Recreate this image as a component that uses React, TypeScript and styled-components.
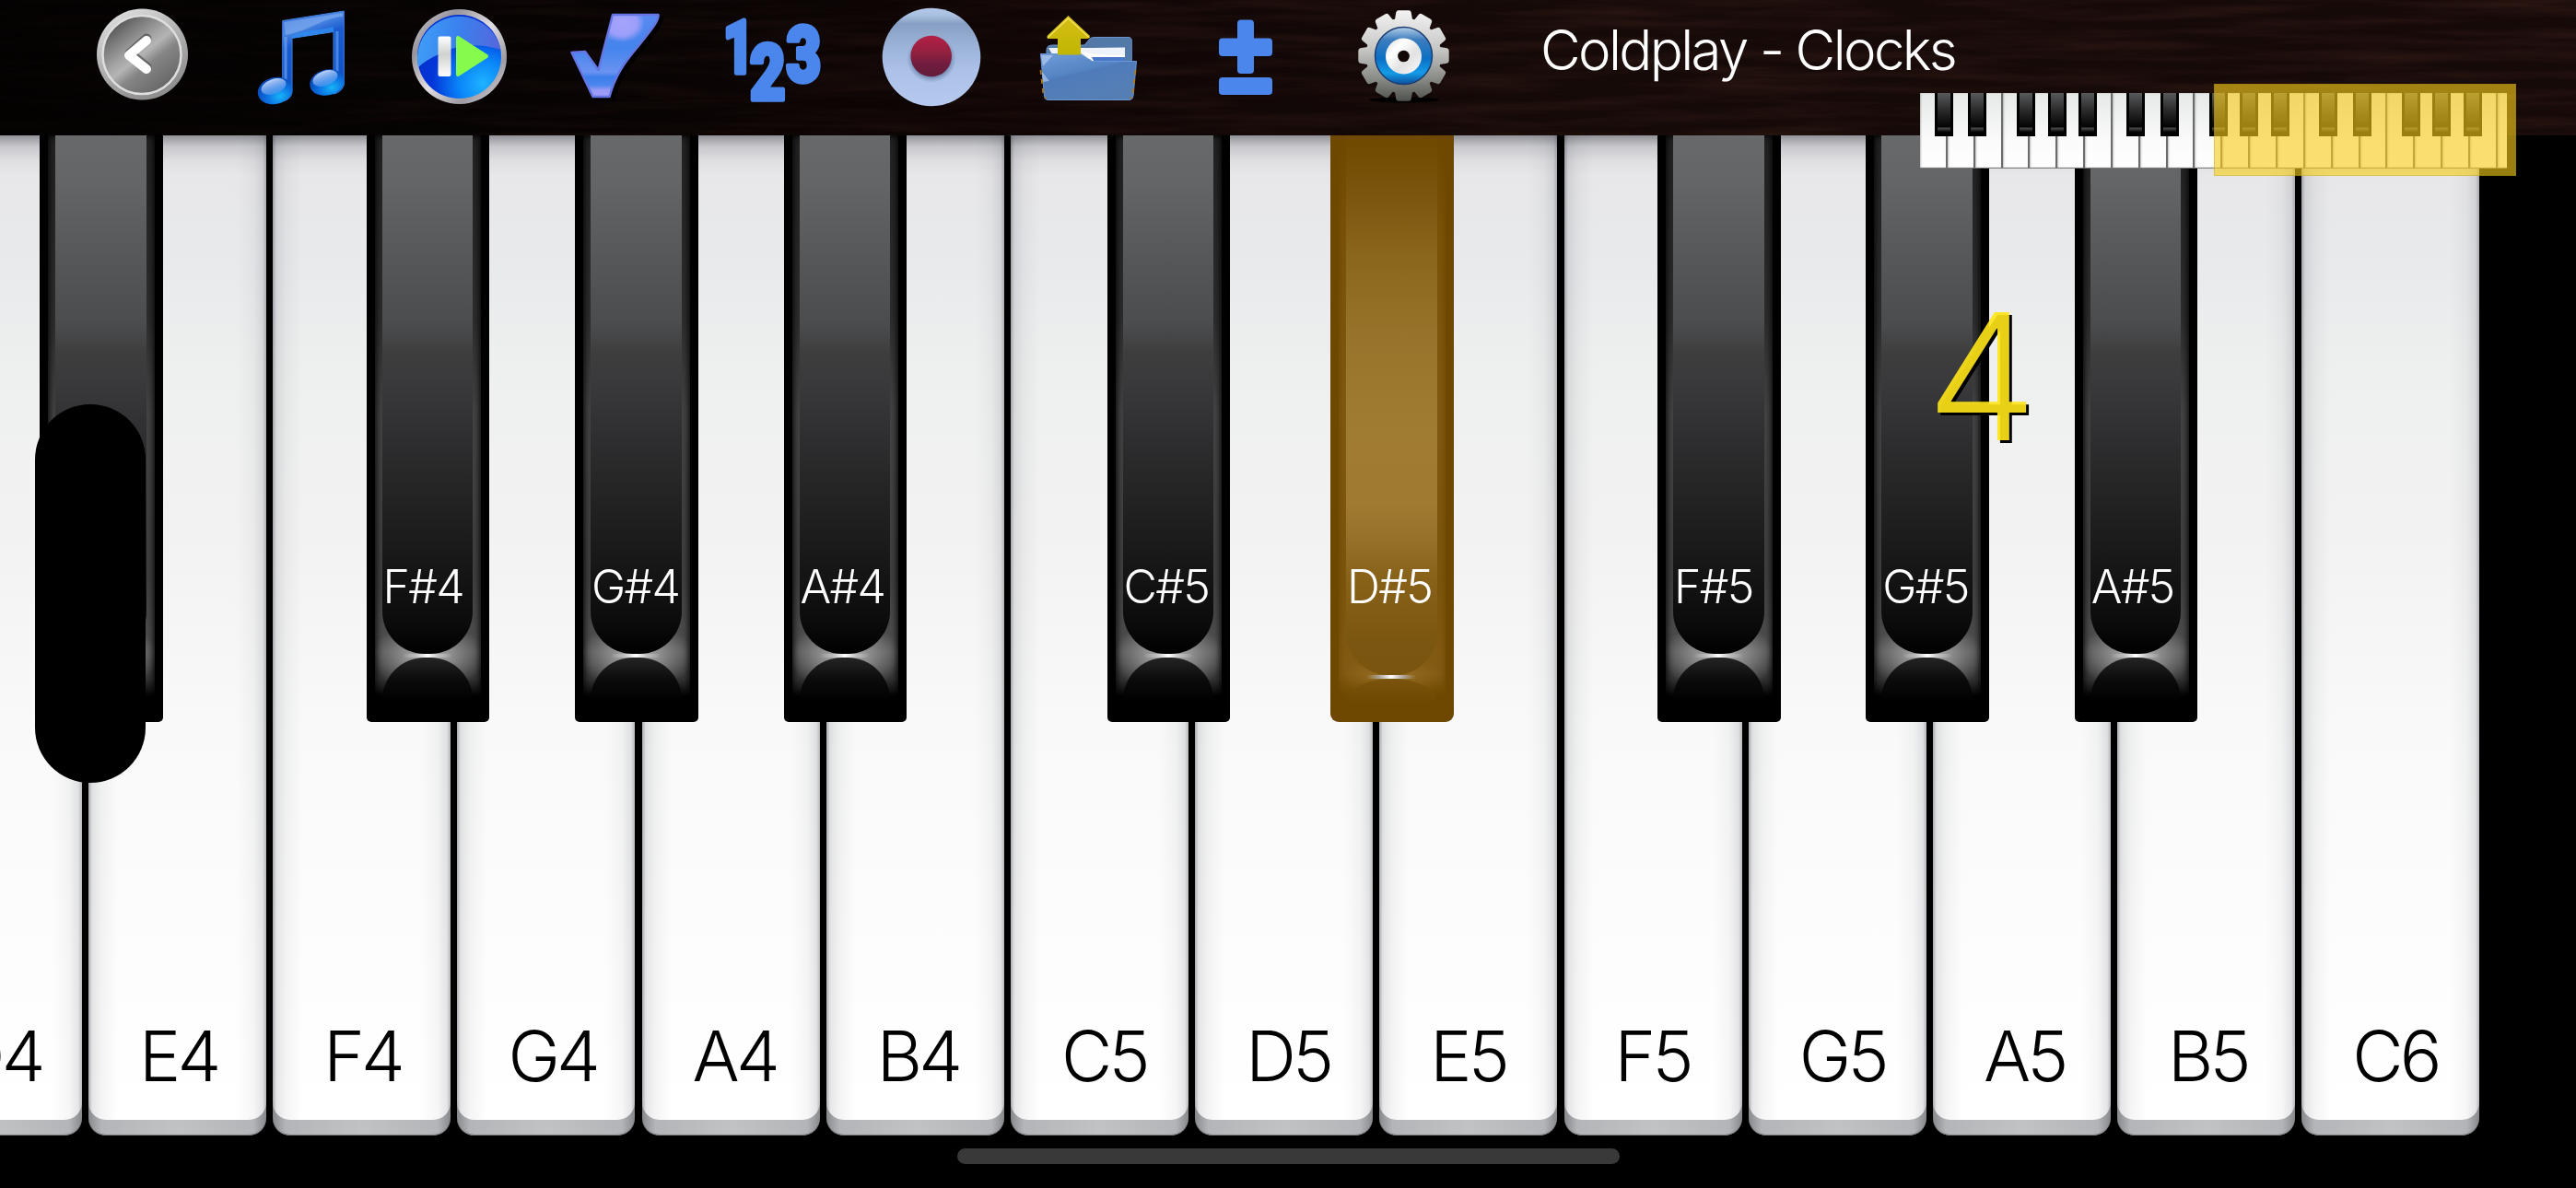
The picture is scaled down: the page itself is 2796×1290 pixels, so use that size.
import React from 'react';
import styled, { createGlobalStyle, css } from 'styled-components';

const GlobalStyle = createGlobalStyle`
  * { box-sizing: border-box; }
  html, body { margin: 0; background: #000; overflow: hidden; }
`;

const labelFont = css`
  font-family: Inter, 'Liberation Sans', sans-serif;
  font-weight: 300;
  line-height: 1;
  white-space: nowrap;
`;

const Screen = styled.div`
  position: relative;
  display: flex;
  flex-direction: column;
  width: 2796px;
  height: 1290px;
  overflow: hidden;
  background: #000;
`;

const Toolbar = styled.header`
  position: relative;
  display: flex;
  flex: none;
  height: 147px;
  padding-left: 69px;
  background: linear-gradient(90deg, #040202 0, #060303 500px, #0f0605 1100px, #150a08 1700px, #160a09 100%);
`;

const Grain = styled.svg`
  position: absolute;
  inset: 0;
  width: 100%;
  height: 100%;
`;

const ToolButton = styled.button`
  position: relative;
  flex: none;
  width: 171px;
  height: 147px;
  padding: 0;
  border: 0;
  background: none;
  svg { display: block; }
`;

const Title = styled.h1`
  ${labelFont}
  position: relative;
  margin: 24px 0 0 64px;
  font-size: 60px;
  letter-spacing: -2.65px;
  color: #fff;
`;

const Keybed = styled.main`
  position: relative;
  display: flex;
  flex: none;
  gap: 7.2px;
  width: 2796px;
  height: 1086px;
  overflow: hidden;
`;

const WhiteBase = styled.div<{ $first: boolean }>`
  flex: none;
  width: 193px;
  height: 1086px;
  margin-left: ${p => (p.$first ? '-104.2px' : '0')};
  padding-bottom: 17px;
  border-radius: 0 0 19px 19px;
  background: linear-gradient(90deg, #88898c 0, #b4b5b8 14px, #c1c2c4 50%, #b4b5b8 179px, #88898c 100%);
  box-shadow: inset 0 -1px 1px #77787b;
`;

const WhiteFace = styled.div`
  display: flex;
  align-items: flex-end;
  height: 100%;
  padding: 0 0 32px 55px;
  border-radius: 0 0 19px 19px;
  background:
    linear-gradient(180deg, rgba(60, 62, 72, .5) 0, rgba(90, 92, 102, .22) 12px, rgba(120, 122, 132, .07) 28px, transparent 44px),
    linear-gradient(90deg, rgba(50, 52, 64, .4) 0, rgba(80, 82, 94, .15) 4px, rgba(100, 102, 114, .07) 14px, transparent 32px, transparent 161px, rgba(100, 102, 114, .06) 179px, rgba(80, 82, 94, .15) 189px, rgba(50, 52, 64, .34) 100%),
    linear-gradient(180deg, #e6e6e8 0, #e9eaec 150px, #eef0ef 260px, #f2f2f2 430px, #f8f9f8 640px, #fdfdfd 900px, #fff 100%);
`;

const WhiteLabel = styled.span`
  ${labelFont}
  font-size: 76px;
  letter-spacing: -3.8px;
  color: #000;
`;

const BlackKeyBody = styled.div<{ $x: number; $lit: boolean }>`
  position: absolute;
  top: 0;
  left: ${p => p.$x}px;
  display: flex;
  flex-direction: column;
  width: 133.5px;
  height: 637px;
  padding: 0 18px 0 17px;
  border-radius: 0 0 ${p => (p.$lit ? '9px 9px' : '5px 5px')};
  background: ${p => (p.$lit ? '#6e4800' : '#000')};
`;

const Bevel = styled.div<{ $lit: boolean }>`
  position: absolute;
  top: 0;
  left: 9px;
  right: 9px;
  height: 610px;
  background: ${p =>
    p.$lit
      ? `radial-gradient(ellipse 52px 24px at 50% 588px, rgba(200,150,70,.35), transparent),
         linear-gradient(180deg, #6e4800 0, #7a5208 100px, #815912 300px, #7c550d 480px, #835b14 585px, #6e4800 610px)`
      : `radial-gradient(ellipse 62px 38px at 50% 566px, rgba(225,225,225,.75), transparent),
         linear-gradient(180deg, #222 0, #2d2d2d 200px, #434343 300px, #3f3f3f 480px, #4e4e4f 560px, #333 590px, #000 610px)`};
  box-shadow: inset 0 0 7px 1px ${p => (p.$lit ? '#6e4800' : '#000')};
`;

const BlackFace = styled.div<{ $lit: boolean }>`
  position: relative;
  display: flex;
  flex: none;
  align-items: flex-end;
  height: ${p => (p.$lit ? 586 : 563)}px;
  padding-bottom: ${p => (p.$lit ? 71 : 48)}px;
  border-radius: 0 0 46px 46px;
  background: ${p =>
    p.$lit
      ? 'linear-gradient(180deg, #704900 0, #78510a 50px, #8a651c 130px, #98732b 220px, #a07b32 320px, #a07a31 400px, #96702a 440px, #886219 480px, #7b5610 550px, #7a5510 100%)'
      : 'linear-gradient(180deg, #68696b 0, #646567 50px, #555658 140px, #4b4c4e 205px, #3e3e3f 235px, #39393b 270px, #2e2e30 330px, #222 400px, #161616 470px, #0b0b0b 530px, #000 100%)'};
`;

const Gloss = styled.div<{ $lit: boolean }>`
  position: relative;
  flex: none;
  align-self: center;
  width: 54px;
  height: 4px;
  background: linear-gradient(90deg, transparent, ${p => (p.$lit ? '#a9a294' : '#bbb')} 25%, #fff 50%, ${p => (p.$lit ? '#a9a294' : '#bbb')} 75%, transparent);
`;

const Dome = styled.div<{ $lit: boolean }>`
  position: relative;
  flex: none;
  height: ${p => (p.$lit ? 26 : 48)}px;
  border-radius: ${p => (p.$lit ? '50% 50% 0 0 / 100% 100% 0 0' : '46px 46px 0 0')};
  background: ${p => (p.$lit ? 'linear-gradient(180deg, #7a540d, #6e4800)' : 'linear-gradient(180deg, #242424, #0b0b0b 50%, #000)')};
`;

const BlackLabel = styled.span`
  ${labelFont}
  margin-left: 1px;
  font-size: 50px;
  letter-spacing: -1.7px;
  color: #fff;
`;

const FingerMarker = styled.div`
  position: absolute;
  top: 439px;
  left: 37.5px;
  width: 120px;
  height: 411px;
  border-radius: 60px;
  background: #000;
`;

const FingerNumber = styled.div`
  ${labelFont}
  position: absolute;
  top: 313px;
  left: 2091px;
  font-size: 191px;
  color: rgba(255, 229, 25, .91);
  text-shadow: 3px 3px 0 #000;
`;

const MiniMap = styled.div`
  position: absolute;
  top: 101px;
  left: 2084px;
  display: flex;
  width: 637px;
  height: 82px;
  overflow: hidden;
  background: #fff;
`;

const MiniWhite = styled.div`
  flex: none;
  width: 29.85px;
  height: 82px;
  border-right: 2px solid #6a6b6d;
  border-bottom: 1px solid #777;
  background: linear-gradient(180deg, #e6e8e8, #fafafa 60%, #fff);
  box-shadow: inset 1px 0 2px rgba(0, 0, 0, .25);
`;

const MiniBlack = styled.div<{ $x: number }>`
  position: absolute;
  top: 0;
  left: ${p => p.$x}px;
  width: 20px;
  height: 46.5px;
  border: solid #000;
  border-width: 0 3px 4px;
  background:
    linear-gradient(180deg, transparent 37px, #4a4a4a 38px, #1c1c1c 41px, transparent 42px),
    linear-gradient(180deg, #58595b, #2c2c2d 18px, #050505 36px);
`;

const VisibleRange = styled.div`
  position: absolute;
  top: 91px;
  left: 2402.5px;
  width: 328.5px;
  height: 99.5px;
  background: rgba(247, 205, 24, .62);
  box-shadow: inset 0 0 0 1px rgba(150, 115, 0, .25);
`;

const HomeIndicator = styled.div`
  position: absolute;
  left: 1039px;
  top: 1247px;
  width: 719px;
  height: 17px;
  border-radius: 8.5px;
  background: #393939;
`;

const Icon = ({ children }: { children: React.ReactNode }) => (
  <svg width="171" height="147" viewBox="0 0 171 147">{children}</svg>
);

const BackIcon = () => (
  <Icon>
    <defs>
      <linearGradient id="bkRim" x1="0" y1="0" x2="0.5" y2="1">
        <stop offset="0" stopColor="#e8e8e8" /><stop offset=".5" stopColor="#b5b5b5" /><stop offset="1" stopColor="#8f8f8f" />
      </linearGradient>
      <linearGradient id="bkFace" x1=".1" y1="0" x2=".9" y2="1">
        <stop offset="0" stopColor="#3c3c3c" /><stop offset=".22" stopColor="#777" /><stop offset=".42" stopColor="#a6a6a6" />
        <stop offset=".5" stopColor="#b4b4b4" /><stop offset=".62" stopColor="#858585" /><stop offset="1" stopColor="#5c5c5c" />
      </linearGradient>
    </defs>
    <circle cx="85.5" cy="59" r="49.5" fill="url(#bkRim)" />
    <circle cx="85" cy="59.5" r="42.5" fill="url(#bkFace)" stroke="#dedede" strokeWidth="2.5" />
    <path d="M89 44 L71 60 L89 75" fill="none" stroke="#444" strokeOpacity=".6" strokeWidth="11" strokeLinecap="round" strokeLinejoin="round" transform="translate(1,-2)" />
    <path d="M90 44 L71 60 L90 75" fill="none" stroke="#fff" strokeWidth="10" strokeLinecap="round" strokeLinejoin="round" />
  </Icon>
);

const NoteIcon = () => (
  <Icon>
    <defs>
      <linearGradient id="ntBeam" x1="0" y1="0" x2=".25" y2="1">
        <stop offset="0" stopColor="#2f6ad4" /><stop offset=".25" stopColor="#4a86e2" /><stop offset=".4" stopColor="#1b5bd0" /><stop offset="1" stopColor="#0d4fc8" />
      </linearGradient>
      <radialGradient id="ntHead" cx=".6" cy=".75" r=".7">
        <stop offset="0" stopColor="#17b4f7" /><stop offset=".5" stopColor="#0c74e4" /><stop offset="1" stopColor="#0a49b8" />
      </radialGradient>
      <linearGradient id="ntShine" x1="0" y1="0" x2="0" y2="1">
        <stop offset="0" stopColor="#b9d2f8" /><stop offset="1" stopColor="#5f9cf0" stopOpacity=".5" />
      </linearGradient>
    </defs>
    <path d="M66.7 22.5 L133.3 12 V91 C133 96 128 101 122 102 V34.5 L77 41.5 V100 C76 106 72 109 66.7 110 Z" fill="url(#ntBeam)" stroke="#3f80dc" strokeWidth="1" />
    <path d="M68 24 L132 14 V18 C108 20 96 34 70 38 Z" fill="#8fb8f3" opacity=".5" />
    <path d="M76 39 C92 31 108 34 122 29 V34.5 L77 41.5 Z" fill="#2f8cf0" opacity=".8" />
    <path d="M70 40 V92" stroke="#6aa2ee" strokeWidth="3" opacity=".7" />
    <path d="M126 34 V82" stroke="#5c9aee" strokeWidth="3" opacity=".7" />
    <ellipse cx="58.5" cy="98.5" rx="19" ry="14.5" fill="url(#ntHead)" transform="rotate(-14 58.5 98.5)" />
    <ellipse cx="115" cy="89.5" rx="19" ry="14" fill="url(#ntHead)" transform="rotate(-14 115 89.5)" />
    <ellipse cx="57" cy="94" rx="14" ry="8" fill="url(#ntShine)" transform="rotate(-20 57 94)" />
    <ellipse cx="113" cy="85" rx="14" ry="8" fill="url(#ntShine)" transform="rotate(-20 113 85)" />
  </Icon>
);

const PlayIcon = () => (
  <Icon>
    <defs>
      <radialGradient id="plFace" cx=".78" cy=".82" r=".8">
        <stop offset="0" stopColor="#1fb2ff" /><stop offset=".35" stopColor="#0a86fa" /><stop offset=".75" stopColor="#0336d8" /><stop offset="1" stopColor="#0430d0" />
      </radialGradient>
      <linearGradient id="plTop" x1="0" y1=".2" x2="1" y2=".3">
        <stop offset="0" stopColor="#3fa0f8" /><stop offset=".5" stopColor="#3a80ee" /><stop offset="1" stopColor="#5468dc" />
      </linearGradient>
      <linearGradient id="plRim" x1="0" y1="0" x2="1" y2="1">
        <stop offset="0" stopColor="#cfcdd4" /><stop offset=".25" stopColor="#98949c" /><stop offset=".5" stopColor="#e2e0e4" /><stop offset=".75" stopColor="#9f9ba3" /><stop offset="1" stopColor="#dedce2" />
      </linearGradient>
      <linearGradient id="plBar" x1="0" y1="0" x2="0" y2="1">
        <stop offset="0" stopColor="#fff" /><stop offset=".45" stopColor="#cfd2cf" /><stop offset="1" stopColor="#fff" />
      </linearGradient>
    </defs>
    <circle cx="87.5" cy="61.5" r="51.5" fill="url(#plRim)" />
    <circle cx="87.5" cy="61.5" r="45.5" fill="url(#plFace)" />
    <path d="M43 73 A45.5 45.5 0 1 1 132.5 54 C106 46 84 49 67 58 C56 63 48 68 43 73 Z" fill="url(#plTop)" />
    <rect x="64.5" y="39.5" width="14" height="43.5" rx="2" fill="url(#plBar)" />
    <path d="M86 41 V81 L117 61 Z" fill="#86fb4d" stroke="#86fb4d" strokeWidth="4" strokeLinejoin="round" />
  </Icon>
);

const checkShape = 'M38.5 57 L53 56 L67.5 76 L83 16 H132.500 C134 22 122 36 110 51 C94 70 85 84 79.5 105 H61.500 Z';

const CheckIcon = () => (
  <Icon>
    <defs>
      <linearGradient id="ckFill" x1="0" y1="0" x2="0" y2="1">
        <stop offset="0" stopColor="#5a8af0" /><stop offset=".4" stopColor="#4384ec" /><stop offset=".7" stopColor="#6a93f2" />
        <stop offset=".76" stopColor="#3a7eea" /><stop offset=".86" stopColor="#4e86ee" /><stop offset=".92" stopColor="#9a9bf8" /><stop offset="1" stopColor="#a09df8" />
      </linearGradient>
      <radialGradient id="ckShine" cx=".5" cy=".5" r=".5">
        <stop offset="0" stopColor="#a6a3fb" /><stop offset=".65" stopColor="#9c9ffa" /><stop offset="1" stopColor="#9c9ffa" stopOpacity="0" />
      </radialGradient>
      <clipPath id="ckClip"><path d={checkShape} /></clipPath>
    </defs>
    <path d={checkShape} fill="#000" stroke="#000" strokeWidth="3" transform="translate(4,3)" />
    <path d={checkShape} fill="url(#ckFill)" />
    <g clipPath="url(#ckClip)"><ellipse cx="93" cy="25" rx="25" ry="21" fill="url(#ckShine)" /></g>
    <path d={checkShape} fill="none" stroke="#6576e2" strokeWidth="2.5" strokeLinejoin="round" />
  </Icon>
);

const digitProps = {
  fontFamily: 'Roboto, "Liberation Sans", sans-serif',
  fontWeight: 900,
  fill: '#4a86ec',
  stroke: '#4a86ec',
  strokeWidth: 5.5,
  strokeLinejoin: 'round' as const,
};

const NumbersIcon = () => (
  <Icon>
    <text {...digitProps} fontSize="79" transform="translate(32 78.5) scale(.72 1)">1</text>
    <text {...digitProps} fontSize="83" transform="translate(100.5 88) scale(.78 1)">3</text>
    <text {...digitProps} fontSize="83" transform="translate(61 108) scale(.8 1)">2</text>
  </Icon>
);

const RecordIcon = () => (
  <Icon>
    <defs>
      <linearGradient id="rcPlate" x1="0" y1="0" x2="0" y2="1">
        <stop offset="0" stopColor="#b4c9ea" /><stop offset=".08" stopColor="#a9bfe0" /><stop offset=".16" stopColor="#879fc2" /><stop offset=".36" stopColor="#9ab1d6" /><stop offset=".65" stopColor="#adc2e8" /><stop offset="1" stopColor="#b6c9ee" />
      </linearGradient>
      <linearGradient id="rcDot" x1="0" y1="0" x2="0" y2="1">
        <stop offset="0" stopColor="#b41f45" /><stop offset=".4" stopColor="#94203f" /><stop offset=".7" stopColor="#6f1c3e" /><stop offset="1" stopColor="#641c3c" />
      </linearGradient>
      <radialGradient id="rcShade"><stop offset=".7" stopColor="#51688f" stopOpacity=".8" /><stop offset="1" stopColor="#6f88b0" stopOpacity="0" /></radialGradient>
    </defs>
    <circle cx="87" cy="62" r="53.3" fill="url(#rcPlate)" />
    <ellipse cx="87" cy="64" rx="27" ry="26" fill="url(#rcShade)" />
    <circle cx="86.7" cy="61" r="22.3" fill="url(#rcDot)" />
  </Icon>
);

const FolderIcon = () => (
  <Icon>
    <defs>
      <linearGradient id="fdFront" x1="0" y1="0" x2=".5" y2="1">
        <stop offset="0" stopColor="#6f9bd8" /><stop offset=".45" stopColor="#5584c4" /><stop offset=".5" stopColor="#4f7bbb" /><stop offset="1" stopColor="#557fb4" />
      </linearGradient>
      <linearGradient id="fdArrow" x1="0" y1="0" x2="0" y2="1">
        <stop offset="0" stopColor="#d6bd18" /><stop offset="1" stopColor="#c0b600" />
      </linearGradient>
    </defs>
    <path d="M41 55 C41 50 44 49 48 49 H82 L88 42 C89 41 91 40.500 93 40.500 H130 C132 40.500 133.3 42 133.3 44 V70 H41 Z" fill="#5379a8" stroke="#6b93cb" strokeWidth="1" />
    <path d="M43 52 H90 L126 51.5 V64 H50 Z" fill="#eef3fb" />
    <path d="M79 56 C90 59 104 60 126 60 V66 H90 Z" fill="#fff" />
    <path d="M90 62 H126 V66 H92 Z" fill="#4a78c8" />
    <path d="M34.5 58.5 H78 L90 66.500 H138.500 L135 104 C134.5 107 133 108.500 130 108.500 H43 C40 108.500 39 107 38.5 104 Z" fill="url(#fdFront)" stroke="#6c97d6" strokeWidth="1" />
    <path d="M34.5 76 L37.5 103 L40 107 M137.5 76 L134.5 103 L132 107" fill="none" stroke="#b07a10" strokeWidth="1.8" strokeDasharray="5 5" />
    <path d="M35 60 L48 60 L37 72 Z M36 78 L37 89 L44 88 Z" fill="#c6dbf7" opacity=".55" />
    <path d="M64.5 17 L88 39 L86 42 H78 V59.500 H53 V42 H42 L41.5 39 Z" fill="url(#fdArrow)" />
    <path d="M42 41 L64.5 20 L87.5 41" fill="none" stroke="#f1e25a" strokeWidth="1.5" />
  </Icon>
);

const PlusMinusIcon = () => (
  <Icon>
    <g fill="#4a86ec">
      <rect x="77" y="21.5" width="18" height="58.5" rx="4" />
      <rect x="57" y="41.5" width="58" height="19.5" rx="4" />
      <rect x="57" y="84" width="58" height="19" rx="4" />
    </g>
  </Icon>
);

const GearIcon = () => (
  <Icon>
    <defs>
      <linearGradient id="grBody" x1="0" y1="0" x2="0" y2="1">
        <stop offset="0" stopColor="#f4f4f4" /><stop offset=".45" stopColor="#c4c5c3" /><stop offset=".75" stopColor="#8a8c88" /><stop offset="1" stopColor="#4f514d" />
      </linearGradient>
      <linearGradient id="grBlue" x1="0" y1="0" x2="0" y2="1">
        <stop offset="0" stopColor="#b6cfe8" /><stop offset=".22" stopColor="#3c7dbe" /><stop offset=".55" stopColor="#0b6fc4" /><stop offset=".8" stopColor="#149be8" /><stop offset="1" stopColor="#0c4f9c" />
      </linearGradient>
      <linearGradient id="grDisc" x1="0" y1="0" x2="1" y2="1">
        <stop offset="0" stopColor="#dadada" /><stop offset=".3" stopColor="#fff" /><stop offset=".6" stopColor="#e2e2e2" /><stop offset="1" stopColor="#fafafa" />
      </linearGradient>
      <mask id="grMask" maskUnits="userSpaceOnUse" x="30" y="5" width="115" height="115">
        <circle cx="86.5" cy="60.5" r="41" fill="#fff" />
        {Array.from({ length: 12 }, (_, i) => (
          <path key={i} d="M76.5 24 L78.3 13.5 Q78.7 11.3 81 11.3 H92 Q94.3 11.3 94.7 13.5 L96.5 24 Z" fill="#fff" transform={`rotate(${i * 30} 86.5 60.5)`} />
        ))}
      </mask>
    </defs>
    <ellipse cx="87" cy="108.5" rx="38" ry="3" fill="#000" />
    <rect x="30" y="10" width="115" height="100" fill="url(#grBody)" mask="url(#grMask)" />
    <circle cx="86.5" cy="60.5" r="31" fill="url(#grBlue)" stroke="#1b3c70" strokeWidth="1.5" />
    <circle cx="86.5" cy="61" r="19.5" fill="url(#grDisc)" />
    <circle cx="86.5" cy="61" r="6.3" fill="#120807" />
  </Icon>
);

const tools = [
  { name: 'back', Glyph: BackIcon },
  { name: 'songs', Glyph: NoteIcon },
  { name: 'play', Glyph: PlayIcon },
  { name: 'check', Glyph: CheckIcon },
  { name: 'fingering', Glyph: NumbersIcon },
  { name: 'record', Glyph: RecordIcon },
  { name: 'open', Glyph: FolderIcon },
  { name: 'transpose', Glyph: PlusMinusIcon },
  { name: 'settings', Glyph: GearIcon },
];

const whiteKeys = ['D4', 'E4', 'F4', 'G4', 'A4', 'B4', 'C5', 'D5', 'E5', 'F5', 'G5', 'A5', 'B5', 'C6'];

const blackKeys = [
  { x: 43, label: '' },
  { x: 397.5, label: 'F#4' },
  { x: 624, label: 'G#4' },
  { x: 850.5, label: 'A#4' },
  { x: 1201.5, label: 'C#5' },
  { x: 1444, label: 'D#5', lit: true },
  { x: 1799, label: 'F#5' },
  { x: 2025.3, label: 'G#5' },
  { x: 2251.7, label: 'A#5' },
];

const miniSharps = [0, 1, 2].flatMap(octave => [15.5, 52, 104.7, 138.5, 172].map(x => x + octave * 208.95));

const BlackKey = ({ x, label, lit = false }: { x: number; label: string; lit?: boolean }) => (
  <BlackKeyBody $x={x} $lit={lit}>
    <Bevel $lit={lit} />
    <BlackFace $lit={lit}>
      <BlackLabel>{label}</BlackLabel>
    </BlackFace>
    <Gloss $lit={lit} />
    <Dome $lit={lit} />
  </BlackKeyBody>
);

export default function App() {
  return (
    <Screen>
      <GlobalStyle />
      <Toolbar>
        <Grain>
          <filter id="wood" x="0" y="0" width="100%" height="100%" colorInterpolationFilters="sRGB">
            <feTurbulence type="fractalNoise" baseFrequency="0.006 0.09" numOctaves="4" seed="7" />
            <feColorMatrix values="0 0 0 0 .2  0 0 0 0 .105  0 0 0 0 .085  1.6 0 0 0 -.6" />
          </filter>
          <linearGradient id="woodFade">
            <stop offset="0" stopColor="#fff" stopOpacity=".1" />
            <stop offset=".6" stopColor="#fff" stopOpacity=".75" />
            <stop offset="1" stopColor="#fff" stopOpacity=".85" />
          </linearGradient>
          <mask id="woodMask"><rect width="100%" height="100%" fill="url(#woodFade)" /></mask>
          <g mask="url(#woodMask)"><rect width="100%" height="100%" filter="url(#wood)" /></g>
        </Grain>
        {tools.map(({ name, Glyph }) => (
          <ToolButton key={name} aria-label={name}><Glyph /></ToolButton>
        ))}
        <Title>Coldplay - Clocks</Title>
      </Toolbar>
      <Keybed>
        {whiteKeys.map((note, i) => (
          <WhiteBase key={note} $first={i === 0}>
            <WhiteFace><WhiteLabel>{note}</WhiteLabel></WhiteFace>
          </WhiteBase>
        ))}
        {blackKeys.map(key => <BlackKey key={key.x} {...key} />)}
      </Keybed>
      <FingerMarker />
      <FingerNumber>4</FingerNumber>
      <MiniMap>
        {Array.from({ length: 22 }, (_, i) => <MiniWhite key={i} />)}
        {miniSharps.map(x => <MiniBlack key={x} $x={x} />)}
      </MiniMap>
      <VisibleRange />
      <HomeIndicator />
    </Screen>
  );
}
